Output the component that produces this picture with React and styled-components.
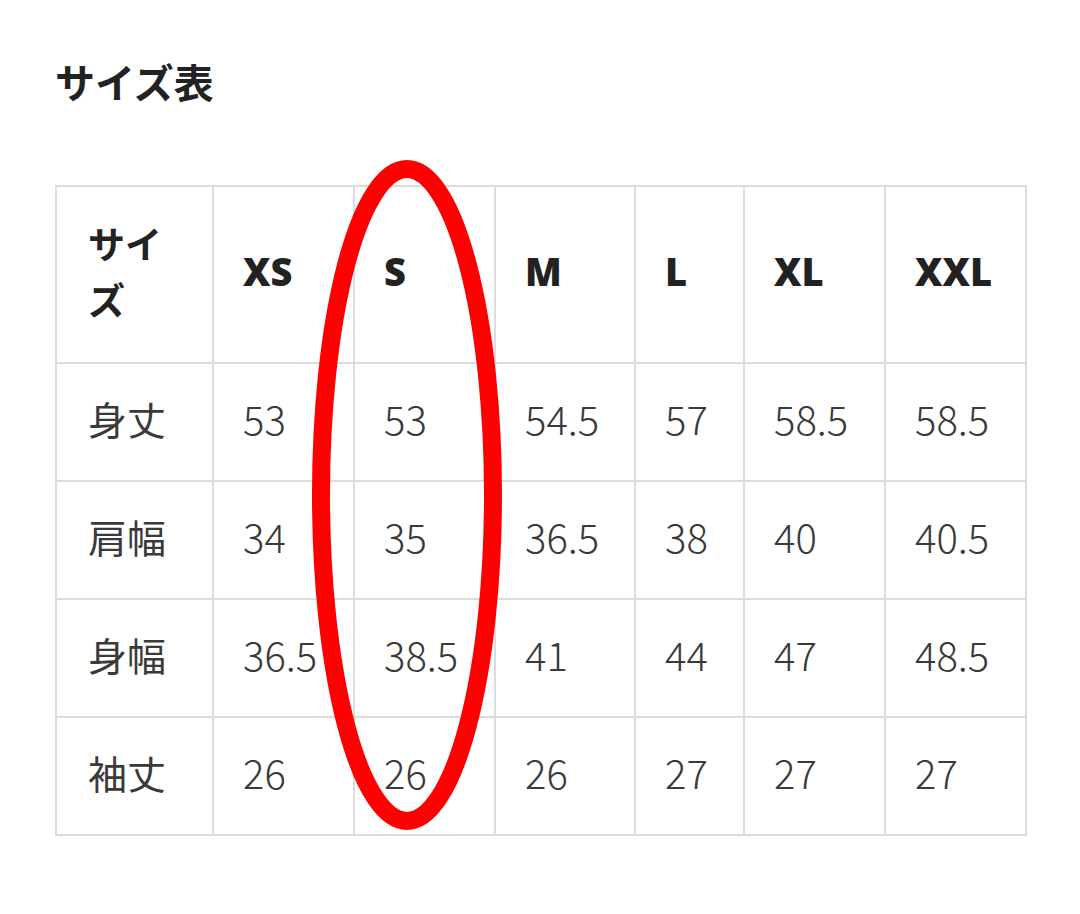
import React from 'react'
import styled, { createGlobalStyle } from 'styled-components'

const GlobalStyle = createGlobalStyle`
  body {
    margin: 0;
    background: #ffffff;
    font-family: "Noto Sans CJK JP", "Noto Sans", sans-serif;
    color: #333333;
  }
`

const sizes = ['XS', 'S', 'M', 'L', 'XL', 'XXL']
const colWidths = [157, 141, 141, 140, 109, 141, 141]

const rows = [
  { label: '身丈', values: ['53', '53', '54.5', '57', '58.5', '58.5'] },
  { label: '肩幅', values: ['34', '35', '36.5', '38', '40', '40.5'] },
  { label: '身幅', values: ['36.5', '38.5', '41', '44', '47', '48.5'] },
  { label: '袖丈', values: ['26', '26', '26', '27', '27', '27'] },
]

const App = () => {
  return (
    <Page>
      <GlobalStyle />
      <Title>サイズ表</Title>
      <TableWrap>
        <SizeTable>
          <colgroup>
            {colWidths.map((w, i) => (
              <col key={i} style={{ width: w }} />
            ))}
          </colgroup>
          <thead>
            <HeadRow>
              <HeadCell>サイズ</HeadCell>
              {sizes.map((s) => (
                <HeadCell key={s} $latin>{s}</HeadCell>
              ))}
            </HeadRow>
          </thead>
          <tbody>
            {rows.map((r) => (
              <BodyRow key={r.label}>
                <Cell>{r.label}</Cell>
                {r.values.map((v, i) => (
                  <Cell key={i}>{v}</Cell>
                ))}
              </BodyRow>
            ))}
          </tbody>
        </SizeTable>
        <Marker viewBox="0 0 220 700" aria-hidden="true">
          <ellipse cx="110" cy="350" rx="86" ry="326" fill="none" stroke="#ff0000" strokeWidth="18" />
        </Marker>
      </TableWrap>
    </Page>
  )
}

export default App

const Page = styled.div`
  padding: 53px 55px 60px;
`

const Title = styled.h1`
  margin: 0 0 76px;
  font-size: 40px;
  line-height: 56px;
  font-weight: 700;
  color: #222222;
`

const TableWrap = styled.div`
  position: relative;
  width: 970px;
`

const SizeTable = styled.table`
  width: 970px;
  table-layout: fixed;
  border-collapse: collapse;
  border: 2px solid #dcdcdc;
`

const HeadRow = styled.tr`
  height: 177px;
`

const BodyRow = styled.tr`
  height: 118px;
`

const HeadCell = styled.th`
  border: 2px solid #dcdcdc;
  padding: 0 ${(p) => (p.$latin ? '0' : '31px')} 8px ${(p) => (p.$latin ? '29px' : '31px')};
  text-align: left;
  font-family: ${(p) => (p.$latin ? '"Open Sans", "Noto Sans CJK JP", sans-serif' : '"Noto Sans CJK JP", sans-serif')};
  font-size: ${(p) => (p.$latin ? '38px' : '37px')};
  line-height: 56px;
  font-weight: ${(p) => (p.$latin ? 800 : 700)};
  color: #222222;
  white-space: ${(p) => (p.$latin ? 'nowrap' : 'normal')};
`

const Cell = styled.td`
  border: 2px solid #dcdcdc;
  padding: 0 0 8px 29px;
  text-align: left;
  font-size: 40px;
  font-weight: 300;
  color: #3a3a3a;
  white-space: nowrap;

  &:first-child {
    padding-left: 31px;
    font-weight: 400;
    font-size: 39px;
  }
`

const Marker = styled.svg`
  position: absolute;
  left: 242px;
  top: -40px;
  width: 220px;
  height: 700px;
  overflow: visible;
  pointer-events: none;
`
